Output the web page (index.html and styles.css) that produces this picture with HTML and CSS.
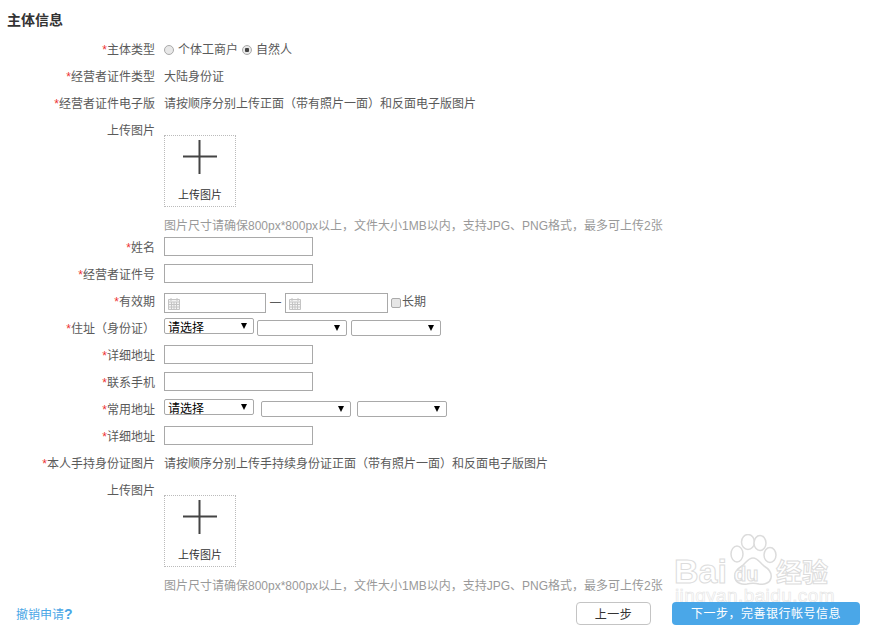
FILE: index.html
```html
<!DOCTYPE html>
<html lang="zh-CN">
<head>
<meta charset="utf-8">
<title>主体信息</title>
<link rel="stylesheet" href="styles.css">
</head>
<body>
<div class="watermark" aria-hidden="true">
  <svg class="paw" width="50" height="52" viewBox="0 0 50 52">
    <g fill="#fff" stroke="#dcdcdc" stroke-width="1.5">
      <ellipse cx="9" cy="20" rx="6" ry="8"/>
      <ellipse cx="20" cy="8" rx="6.500" ry="7.500"/>
      <ellipse cx="32" cy="9" rx="6" ry="7.500"/>
      <ellipse cx="42" cy="21" rx="6" ry="7.500"/>
      <path d="M25 24c-5 0-7 5-11 8-5 3-8 7-7 12s7 7 12 6c4-1 8-1 12 0 5 1 11-1 12-6s-2-9-7-12c-4-3-6-8-11-8z"/>
    </g>
  </svg>
  <span class="wm bai">Bai</span><span class="wm du">du</span><span class="wm jy">经验</span>
  <span class="wm url">jingyan.baidu.com</span>
</div>
<main class="page">
  <h2 class="title">主体信息</h2>
  <div class="row"><div class="label"><i>*</i>主体类型</div><div class="field">
    <span class="radio"></span><span class="t opt">个体工商户</span><span class="radio on"></span><span class="t">自然人</span>
  </div></div>
  <div class="row"><div class="label"><i>*</i>经营者证件类型</div><div class="field"><span class="t">大陆身份证</span></div></div>
  <div class="row"><div class="label"><i>*</i>经营者证件电子版</div><div class="field"><span class="t">请按顺序分别上传正面（带有照片一面）和反面电子版图片</span></div></div>
  <div class="row upload-row"><div class="label">上传图片</div><div class="upload-col">
    <div class="upload"><svg class="plus" width="34" height="34" viewBox="0 0 34 34"><path d="M0 16.5H34M16.5 0V34" stroke="#444" stroke-width="2" fill="none"/></svg><span>上传图片</span></div>
  </div></div>
  <div class="hint-row">图片尺寸请确保800px*800px以上，文件大小1MB以内，支持JPG、PNG格式，最多可上传2张</div>
  <div class="row"><div class="label"><i>*</i>姓名</div><div class="field"><input class="text" type="text"></div></div>
  <div class="row"><div class="label"><i>*</i>经营者证件号</div><div class="field"><input class="text" type="text"></div></div>
  <div class="row date-row"><div class="label"><i>*</i>有效期</div><div class="field">
    <div class="date"><svg width="12" height="13" viewBox="0 0 12 13"><path d="M.5 2.5h11v10H.5zM.5 5h11M3 1v3M9 1v3M3.5 5v7.5M6 5v7.5M8.500 5v7.500M.5 7.500h11M.5 10h11" fill="#f4f4f4" stroke="#c4c4c4"/></svg></div>
    <span class="dash">一</span>
    <div class="date wide"><svg width="12" height="13" viewBox="0 0 12 13"><path d="M.5 2.5h11v10H.5zM.5 5h11M3 1v3M9 1v3M3.5 5v7.5M6 5v7.5M8.500 5v7.500M.5 7.500h11M.5 10h11" fill="#f4f4f4" stroke="#c4c4c4"/></svg></div>
    <span class="check"></span><span class="long">长期</span>
  </div></div>
  <div class="row"><div class="label"><i>*</i>住址（身份证）</div><div class="field selects">
    <div class="sel first">请选择</div><div class="sel low gap3"></div><div class="sel low gap4"></div>
  </div></div>
  <div class="row"><div class="label"><i>*</i>详细地址</div><div class="field"><input class="text" type="text"></div></div>
  <div class="row"><div class="label"><i>*</i>联系手机</div><div class="field"><input class="text" type="text"></div></div>
  <div class="row"><div class="label"><i>*</i>常用地址</div><div class="field selects">
    <div class="sel first">请选择</div><div class="sel low gap7"></div><div class="sel low gap6"></div>
  </div></div>
  <div class="row"><div class="label"><i>*</i>详细地址</div><div class="field"><input class="text" type="text"></div></div>
  <div class="row"><div class="label"><i>*</i>本人手持身份证图片</div><div class="field"><span class="t">请按顺序分别上传手持续身份证正面（带有照片一面）和反面电子版图片</span></div></div>
  <div class="row upload-row"><div class="label">上传图片</div><div class="upload-col">
    <div class="upload"><svg class="plus" width="34" height="34" viewBox="0 0 34 34"><path d="M0 16.5H34M16.5 0V34" stroke="#444" stroke-width="2" fill="none"/></svg><span>上传图片</span></div>
  </div></div>
  <div class="hint-row">图片尺寸请确保800px*800px以上，文件大小1MB以内，支持JPG、PNG格式，最多可上传2张</div>
  <footer class="actions">
    <a class="cancel" href="#">撤销申请<b>?</b></a>
    <button class="btn prev" type="button">上一步</button>
    <button class="btn next" type="button">下一步，完善银行帐号信息</button>
  </footer>
</main>
</body>
</html>
```

FILE: styles.css
```css
html, body { margin: 0; padding: 0; background: #fff; }
body {
  width: 879px;
  height: 629px;
  overflow: hidden;
  position: relative;
  font-family: "Liberation Sans", "Noto Sans CJK SC", sans-serif;
  font-size: 12px;
  color: #5a5a5a;
}
.page { padding-top: 11px; position: relative; }
.title {
  margin: 0 0 6px 7px;
  height: 18px;
  line-height: 18px;
  font-size: 14px;
  font-weight: 700;
  color: #333;
}
.row { display: flex; height: 27px; align-items: center; }
.label { width: 155px; height: 27px; text-align: right; line-height: 31px; flex: none; }
.label i { color: #e33; font-style: normal; }
.field { margin-left: 9px; display: flex; align-items: center; line-height: 27px; white-space: nowrap; }
.t { padding-top: 4px; }
.radio {
  width: 8px; height: 8px; margin-right: 4px; margin-top: 2px;
  border: 1px solid #aaa; border-radius: 50%;
  background: #e8e8e8; box-sizing: content-box;
}
.radio.on { background: radial-gradient(circle, #444 0 2px, #e8e8e8 2.5px); }
.opt { margin-right: 4px; }
.upload-row { height: 95px; align-items: flex-start; }
.upload-col { margin-left: 9px; padding-top: 19px; }
.upload {
  width: 70px; height: 70px;
  border: 1px dotted #bbb;
  display: flex; flex-direction: column; align-items: center;
  color: #333;
  line-height: 16px;
}
.plus { margin-top: 4px; margin-bottom: 13px; }
.upload span { font-size: 11px; }
.hint-row { margin-left: 164px; height: 16px; padding-top: 6px; line-height: 18px; color: #999; white-space: nowrap; }
.text {
  display: block; box-sizing: border-box;
  width: 149px; height: 19px; margin: 0; padding: 0;
  border: 1px solid #a9a9a9; background: #fff;
}
.date-row .field { padding-top: 5px; }
.date {
  box-sizing: border-box; width: 102px; height: 20px;
  border: 1px solid #a9a9a9;
  padding: 3px 0 0 3px;
  line-height: 0;
}
.date.wide { width: 103px; }
.dash { width: 19px; text-align: center; padding-top: 3px; }
.check {
  box-sizing: border-box; width: 10px; height: 10px; margin: 0 1px 0 3px;
  border: 1px solid #aaa; border-radius: 2px; background: #e6e6e6;
}
.long { margin-top: -1px; }
.selects { align-items: flex-start; height: 27px; }
.sel {
  box-sizing: border-box; position: relative;
  width: 90px; height: 16px;
  border: 1px solid #a9a9a9; border-radius: 2px;
  color: #000; line-height: 18px; padding-left: 3px;
  background: #fff;
}
.sel::after {
  content: ""; position: absolute; right: 6px; top: 4px;
  border-style: solid; border-width: 6px 3px 0; border-color: #000 transparent transparent;
}
.first { margin-top: 4px; }
.low { margin-top: 6px; }
.gap3 { margin-left: 3px; }
.gap4 { margin-left: 4px; }
.gap7 { margin-left: 7px; }
.gap6 { margin-left: 6px; }
.actions { display: flex; align-items: center; height: 23px; margin-top: 9px; padding-left: 16px; }
.cancel { color: #4aa6e6; text-decoration: none; margin-right: auto; }
.cancel b { font-size: 14px; line-height: 12px; }
.btn {
  box-sizing: border-box; height: 23px; padding: 2px 0 0; border-radius: 4px;
  font: inherit; line-height: 21px; letter-spacing: .5px;
}
.prev { width: 75px; background: #fff; border: 1px solid #c4c4c4; color: #333; }
.next { width: 188px; margin: 0 19px 0 21px; background: #4aa7e8; border: 0; color: #fff; }
.watermark {
  position: absolute; left: 672px; top: 532px; width: 165px; height: 70px;
  pointer-events: none;
}
.paw { position: absolute; left: 56px; top: 2px; }
.wm {
  position: absolute; font-family: "Liberation Sans", "Noto Sans CJK SC", sans-serif;
  font-weight: 700; color: #fff; -webkit-text-stroke: 1px #dcdcdc; white-space: nowrap; line-height: 1;
}
.bai { left: 2px; top: 25px; font-size: 34px; line-height: 28px; }
.du { left: 62px; top: 32px; font-size: 20px; }
.jy { left: 104px; top: 28px; font-size: 26px; line-height: 22px; font-family: "Noto Sans CJK SC", sans-serif; }
.url { left: 3px; top: 57px; font-size: 19px; line-height: 13px; letter-spacing: .4px; font-weight: 400; -webkit-text-stroke: .6px #e4e4e4; }
```
